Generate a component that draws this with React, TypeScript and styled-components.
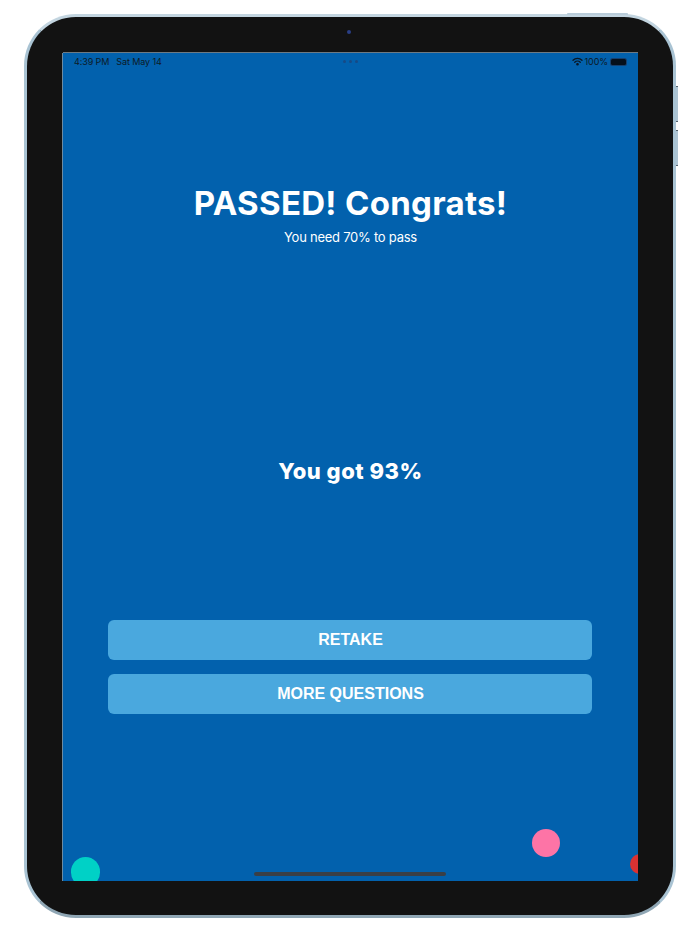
import React from 'react';
import styled, { createGlobalStyle } from 'styled-components';

const GlobalStyle = createGlobalStyle`
  html, body {
    margin: 0;
    padding: 0;
    background: #fff;
    font-family: Inter, "Liberation Sans", sans-serif;
  }
`;

const Page = styled.div`
  width: 700px;
  height: 934px;
  padding: 14px 24px 16px;
  box-sizing: border-box;
  overflow: hidden;
`;

const Device = styled.div`
  position: relative;
  height: 904px;
  box-sizing: border-box;
  padding: 36px 35px 34px 36px;
  background: #121212;
  border: 3px solid #a9c3d3;
  border-top-color: #c3d5e0;
  border-bottom-color: #8fa6b4;
  border-radius: 52px;
`;

const TopButton = styled.div`
  position: absolute;
  top: -4px;
  right: 45px;
  width: 61px;
  height: 2px;
  background: #b9ccd9;
  border-radius: 1px 1px 0 0;
`;

const SideButton = styled.div<{ $top: number }>`
  position: absolute;
  right: -5px;
  top: ${(p) => p.$top}px;
  width: 2px;
  height: 34px;
  background: #aec4d3;
  border-top: 1px solid #56636e;
  border-bottom: 1px solid #56636e;
`;

const Camera = styled.div`
  position: absolute;
  top: 13px;
  left: 320px;
  width: 4px;
  height: 4px;
  border-radius: 50%;
  background: #2a3f86;
`;

const Screen = styled.div`
  position: relative;
  height: 828px;
  display: flex;
  flex-direction: column;
  background: #0261ad;
  overflow: hidden;
  box-shadow: 0 -1px 0 #6d7a84, -1px 0 0 #6d8aa0;
`;

const StatusBar = styled.div`
  height: 17px;
  padding: 0 12px 0 11px;
  display: flex;
  align-items: center;
  justify-content: space-between;
  font-size: 9px;
  letter-spacing: -0.1px;
  color: #0d1a26;
  position: relative;
`;

const StatusGroup = styled.div`
  display: flex;
  align-items: center;
  gap: 7px;
`;

const StatusRight = styled.div`
  display: flex;
  align-items: center;
  gap: 2px;
`;

const Dots = styled.div`
  position: absolute;
  left: 280px;
  top: 7px;
  display: flex;
  gap: 3px;
`;

const Dot = styled.span`
  width: 3px;
  height: 3px;
  border-radius: 50%;
  background: #174a86;
`;

const Battery = styled.div`
  width: 15px;
  height: 6px;
  background: #05101c;
  border-radius: 1.5px;
  box-shadow: 0 0 0 1px #17406f;
  margin-left: 1px;
`;

const Content = styled.div`
  flex: 1;
  display: flex;
  flex-direction: column;
  align-items: center;
  color: #fff;
  padding-top: 112px;
`;

const Title = styled.h1`
  margin: 0;
  font-size: 33px;
  letter-spacing: 0.3px;
  line-height: 42px;
  font-weight: 700;
`;

const Subtitle = styled.p`
  margin: 4px 0 0;
  font-size: 13px;
  letter-spacing: -0.25px;
  line-height: 18px;
  font-weight: 400;
`;

const Score = styled.h2`
  margin: 211px 0 0;
  font-size: 22px;
  letter-spacing: 0.5px;
  line-height: 28px;
  font-weight: 800;
`;

const Actions = styled.div`
  margin: 135px 2px 0 0;
  width: 484px;
  display: flex;
  flex-direction: column;
  gap: 14px;
`;

const ActionButton = styled.button`
  height: 40px;
  padding: 0 0 0 2px;
  border: none;
  border-radius: 6px;
  background: #4aa8de;
  color: #fff;
  font-family: "Liberation Sans", Arial, sans-serif;
  font-size: 16px;
  font-weight: 700;
`;

const HomeBar = styled.div`
  position: absolute;
  left: 191px;
  bottom: 5px;
  width: 192px;
  height: 4px;
  border-radius: 2px;
  background: #3a3f46;
`;

const Balloon = styled.div<{ $x: number; $y: number; $size: number; $color: string }>`
  position: absolute;
  left: ${(p) => p.$x}px;
  top: ${(p) => p.$y}px;
  width: ${(p) => p.$size}px;
  height: ${(p) => p.$size}px;
  border-radius: 50%;
  background: ${(p) => p.$color};
`;

const WifiIcon = () => (
  <svg width="11" height="9" viewBox="0 0 22 17" fill="none" stroke="#0a1622" strokeWidth="2.6" strokeLinecap="round">
    <path d="M2 6 C7 1 15 1 20 6" />
    <path d="M5.5 10 C8.5 7 13.5 7 16.5 10" />
    <circle cx="11" cy="14" r="1.4" fill="#0a1622" />
  </svg>
);

const App = () => {
  return (
    <Page>
      <GlobalStyle />
      <Device>
        <TopButton />
        <SideButton $top={69} />
        <SideButton $top={113} />
        <Camera />
        <Screen>
          <StatusBar>
            <StatusGroup>
              <span>4:39 PM</span>
              <span>Sat May 14</span>
            </StatusGroup>
            <Dots>
              <Dot />
              <Dot />
              <Dot />
            </Dots>
            <StatusRight>
              <WifiIcon />
              <span>100%</span>
              <Battery />
            </StatusRight>
          </StatusBar>
          <Content>
            <Title>PASSED! Congrats!</Title>
            <Subtitle>You need 70% to pass</Subtitle>
            <Score>You got 93%</Score>
            <Actions>
              <ActionButton>RETAKE</ActionButton>
              <ActionButton>MORE QUESTIONS</ActionButton>
            </Actions>
          </Content>
          <Balloon $x={7.5} $y={804} $size={29.5} $color="#00d1c6" />
          <Balloon $x={468.5} $y={776} $size={28} $color="#fd74a6" />
          <Balloon $x={566.5} $y={801} $size={20} $color="#d93232" />
          <HomeBar />
        </Screen>
      </Device>
    </Page>
  );
};

export default App;
